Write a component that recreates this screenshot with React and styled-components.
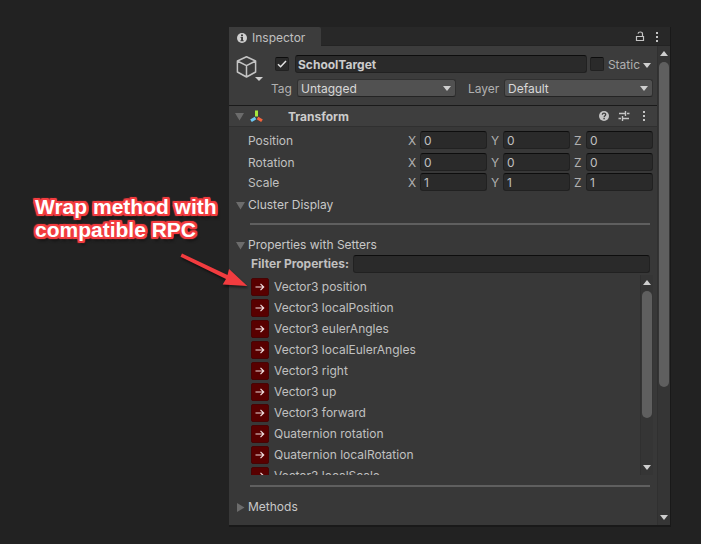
import React, { useState } from 'react';
import styled, { createGlobalStyle } from 'styled-components';

const GlobalStyle = createGlobalStyle`
  *, *::before, *::after { box-sizing: border-box; }
  body {
    margin: 0;
    background: #222222;
    color: #c0c0c0;
    font: 12px/18px Inter, "Liberation Sans", sans-serif;
  }
  button, input, select { font: inherit; color: inherit; margin: 0; }
`;

const Stage = styled.main`
  position: relative;
  min-height: 100vh;
  padding: 27px 31px 17px 229px;
`;

const Window = styled.section`
  background: #383838;
  border-bottom: 2px solid #191919;
  box-shadow: 1px 0 0 #191919;
`;

const TabStrip = styled.header`
  display: flex;
  justify-content: space-between;
  height: 19px;
  background: #282828;
  box-shadow: inset 0 -1px 0 #232323;
`;

const Tab = styled.h1`
  display: flex;
  align-items: center;
  gap: 5px;
  width: 92px;
  margin: 0;
  padding: 3px 0 0 8px;
  border-top-right-radius: 2px;
  background: #3c3c3c;
  font-size: 12px;
  font-weight: 400;
`;

const IconButton = styled.button`
  display: grid;
  place-items: center;
  width: 16px;
  height: 16px;
  padding: 0;
  border: 0;
  background: none;
  color: #c4c4c4;
`;

const StripTools = styled.div`
  display: flex;
  align-items: center;
  gap: 1px;
  padding-right: 5px;
`;

const Body = styled.div`
  display: flex;
`;

const Content = styled.div`
  flex: 1;
  min-width: 0;
  padding-bottom: 9px;
`;

const ObjectHeader = styled.div`
  display: flex;
  gap: 5px;
  padding: 9px 4px 8px 7px;
  background: #3c3c3c;
`;

const ObjectIcon = styled.button`
  display: block;
  width: 27px;
  height: 28px;
  padding: 0;
  border: 0;
  background: none;
  color: #c4c4c4;
`;

const HeaderFields = styled.div`
  flex: 1;
  display: grid;
  gap: 6px;
`;

const HeaderRow = styled.div`
  display: flex;
  align-items: center;
  height: 18px;
`;

const NameRow = styled(HeaderRow)`
  gap: 4px;
  padding-left: 7px;
`;

const TagRow = styled(HeaderRow)`
  padding-left: 3px;
`;

const TextInput = styled.input`
  flex: 1;
  min-width: 0;
  width: 100%;
  height: 18px;
  padding: 1px 3px 0;
  border: 1px solid #212121;
  border-top-color: #0d0d0d;
  border-radius: 3px;
  background: #2a2a2a;
  outline: none;
`;

const NameInput = styled(TextInput)`
  margin: 0 -1px 0 2px;
  padding: 1px 2px 0;
  font-weight: 700;
  color: #cccccc;
`;

const CheckWrap = styled.span`
  display: grid;
  width: 14px;
  height: 14px;
  > * { grid-area: 1 / 1; }
  > svg { pointer-events: none; display: none; }
  > input:checked + svg { display: block; }
`;

const CheckInput = styled.input`
  appearance: none;
  width: 14px;
  height: 14px;
  border: 1px solid #212121;
  border-top-color: #0d0d0d;
  border-radius: 2px;
  background: #2a2a2a;
`;

const StaticMenu = styled.button`
  display: flex;
  align-items: center;
  gap: 3px;
  height: 18px;
  padding: 2px 2px 0 0;
  border: 0;
  background: none;
  color: #b0b0b0;
`;

const FieldLabel = styled.label`
  flex: none;
  width: ${(p) => p.$width}px;
  padding-top: 2px;
  color: #b0b0b0;
`;

const SelectWrap = styled.span`
  flex: ${(p) => p.$grow} 1 0;
  display: grid;
  align-items: center;
  margin-right: ${(p) => p.$after || 0}px;
  > * { grid-area: 1 / 1; }
  > svg { justify-self: end; margin-right: 5px; pointer-events: none; }
`;

const Select = styled.select`
  appearance: none;
  width: 100%;
  height: 18px;
  padding: 0 18px 0 3px;
  border: 1px solid #303030;
  border-bottom-color: #242424;
  border-radius: 3px;
  background: #515151;
  color: #d8d8d8;
`;

const ComponentBar = styled.div`
  display: flex;
  align-items: center;
  height: 22px;
  padding: 0 5px 0 6px;
  border-top: 1px solid #1a1a1a;
  border-bottom: 1px solid #303030;
  background: #3e3e3e;
`;

const ComponentTitle = styled.h2`
  flex: 1;
  display: flex;
  align-items: center;
  gap: 25px;
  margin: 0 0 0 6px;
  font-size: 12px;
  font-weight: 700;
  color: #cccccc;
  > span { padding-top: 2px; }
`;

const BarTools = styled.div`
  display: flex;
  gap: 4px;
`;

const FoldToggle = styled.button`
  display: flex;
  align-items: center;
  gap: 3px;
  height: 18px;
  padding: 0;
  border: 0;
  background: none;
`;

const Fold = styled(FoldToggle)`
  margin-left: 7px;
  color: #c8c8c8;
`;

const VectorList = styled.div`
  display: grid;
  gap: 2px;
  padding: 4px 4px 5px 19px;
`;

const VectorRow = styled.fieldset`
  display: flex;
  gap: 4px;
  min-width: 0;
  height: 18px;
  margin: 0 0 ${(p) => (p.$spaced ? 2 : 0)}px;
  padding: 0;
  border: 0;
`;

const VectorName = styled.span`
  flex: none;
  width: 156px;
  padding-top: 1px;
`;

const Axis = styled.label`
  flex: 1;
  min-width: 0;
  display: flex;
  > span { flex: none; width: 12px; padding-top: 1px; color: #b0b0b0; }
`;

const Divider = styled.hr`
  height: 2px;
  margin: ${(p) => p.$before}px 7px ${(p) => p.$after}px 21px;
  border: 0;
  background: #5f5f5f;
`;

const FilterRow = styled.div`
  display: flex;
  align-items: center;
  margin-top: 1px;
  padding: 0 7px 0 22px;
  label { flex: none; width: 102px; font-weight: 700; color: #c0c0c0; }
`;

const ListView = styled.div`
  display: flex;
  height: 200px;
  margin: 2px 4px 0 22px;
`;

const PropertyList = styled.ul`
  flex: 1;
  min-width: 0;
  margin: 0;
  padding: 3px 0 0;
  overflow: hidden;
  list-style: none;
`;

const Property = styled.li`
  display: flex;
  align-items: center;
  gap: 5px;
  height: 18px;
  margin-bottom: 3px;
`;

const WrapButton = styled.button`
  display: grid;
  place-items: center;
  width: 18px;
  height: 18px;
  padding: 0;
  border: 1px solid #460404;
  border-radius: 2px;
  background: #580000;
  color: #f0dcdc;
`;

const ScrollTrack = styled.div`
  flex: none;
  display: flex;
  flex-direction: column;
  align-items: center;
  justify-content: space-between;
  width: 13px;
  padding: 5px 0;
  border-left: 1px solid #303030;
  background: #353535;
`;

const ScrollThumb = styled.div`
  flex: ${(p) => p.$size} 1 0;
  width: 10px;
  margin-top: 6px;
  border-radius: 5px;
  background: #5f5f5f;
`;

const ScrollRest = styled.div`
  flex: ${(p) => p.$size} 1 0;
`;

const Callout = styled.p`
  position: absolute;
  left: 35px;
  top: 195px;
  width: 190px;
  margin: 0;
  font: 700 21px/23px "Liberation Sans", Arial, sans-serif;
  color: #ffffff;
  text-shadow:
    2px 0 #f23c3f, -2px 0 #f23c3f, 0 2px #f23c3f, 0 -2px #f23c3f,
    2px 1px #f23c3f, -2px 1px #f23c3f, 2px -1px #f23c3f, -2px -1px #f23c3f,
    1px 2px #f23c3f, -1px 2px #f23c3f, 1px -2px #f23c3f, -1px -2px #f23c3f,
    2px 2px 1px #f23c3f, -2px 2px 1px #f23c3f, 2px -2px 1px #f23c3f, -2px -2px 1px #f23c3f,
    2px 4px 3px #00000080;
`;

const CalloutArrow = styled.svg`
  position: absolute;
  left: 176px;
  top: 248px;
  filter: drop-shadow(1px 2px 1px #00000080);
`;

const Caret = ({ up }) => (
  <svg width="8" height="5" viewBox="0 0 8 5" fill="#cfcfcf" aria-hidden="true">
    <path d={up ? 'M0 5 4 0 8 5Z' : 'M0 0H8L4 5Z'} />
  </svg>
);

const FoldArrow = ({ open }) => (
  <svg width="9" height="9" viewBox="0 0 9 9" fill="#6c6c6c" aria-hidden="true">
    <path d={open ? 'M0 1H9L4.5 8.5Z' : 'M1 0V9L8.5 4.5Z'} />
  </svg>
);

const InfoIcon = () => (
  <svg width="10" height="10" viewBox="0 0 10 10" aria-hidden="true">
    <circle cx="5" cy="5" r="5" fill="#cfcfcf" />
    <path d="M4 1.6h2v1.6H4zM3.6 4H6v3.2h.7V8.3H3.4V7.2h.7V5.1h-.5z" fill="#3c3c3c" />
  </svg>
);

const LockIcon = () => (
  <svg width="10" height="11" viewBox="0 0 10 11" fill="none" stroke="currentColor" aria-hidden="true">
    <path d="M1.5 5.5h7v4h-7z" strokeWidth="1.2" />
    <path d="M7.5 5.5V2.8C7.5 1.5 6.600 1 5.3 1S3.2 1.5 3 2.6" strokeWidth="1.2" />
  </svg>
);

const DotsIcon = () => (
  <svg width="2" height="10" viewBox="0 0 2 10" fill="currentColor" aria-hidden="true">
    <rect width="2" height="2" />
    <rect y="4" width="2" height="2" />
    <rect y="8" width="2" height="2" />
  </svg>
);

const HelpIcon = () => (
  <svg width="10" height="10" viewBox="0 0 10 10" aria-hidden="true">
    <circle cx="5" cy="5" r="5" fill="currentColor" />
    <path d="M3.3 3.7C3.4 2.6 4 2.2 5 2.2S6.7 2.8 6.7 3.7C6.7 4.8 5.1 4.8 5.1 6.2" fill="none" stroke="#3e3e3e" strokeWidth="1.3" />
    <rect x="4.4" y="7" width="1.4" height="1.3" fill="#3e3e3e" />
  </svg>
);

const PresetIcon = () => (
  <svg width="12" height="10" viewBox="0 0 12 10" fill="none" stroke="currentColor" strokeWidth="1.4" aria-hidden="true">
    <path d="M1 2.5H7.5M9 2.5H11.500M7.5 0V5M.5 7.500H3M4.5 7.500H11M4.5 5V10" />
  </svg>
);

const CubeIcon = () => (
  <svg width="27" height="28" viewBox="0 0 27 28" fill="none" aria-hidden="true">
    <path d="M10.500 1.800 19.600 6v11L10.500 22 1.400 17V6Z M1.400 6l9.100 4.600L19.600 6M10.500 10.600V22" stroke="currentColor" strokeWidth="1.500" strokeLinejoin="round" />
    <path d="M19 22h8l-4 4z" fill="#cfcfcf" />
  </svg>
);

const AxesIcon = () => (
  <svg width="13" height="13" viewBox="0 0 13 13" fill="none" strokeWidth="3" aria-hidden="true">
    <path d="M6.500 .5v6" stroke="#a8e83e" />
    <path d="M5.500 8 1 10.800" stroke="#6cc8f4" />
    <path d="M7.500 8l4.500 2.800" stroke="#f4643c" />
  </svg>
);

const RightArrow = () => (
  <svg width="10" height="8" viewBox="0 0 10 8" fill="none" stroke="currentColor" strokeWidth="1.2" aria-hidden="true">
    <path d="M.5 4H8.5M5.500 .8 8.700 4 5.500 7.200" />
  </svg>
);

const CheckMark = () => (
  <svg width="14" height="14" viewBox="0 0 14 14" fill="none" stroke="#e4e4e4" strokeWidth="1.5" aria-hidden="true">
    <path d="M3 7.200 5.600 9.700 11 4" />
  </svg>
);

const Checkbox = ({ label, checked: initial }) => {
  const [checked, setChecked] = useState(Boolean(initial));
  return (
    <CheckWrap>
      <CheckInput type="checkbox" aria-label={label} checked={checked} onChange={() => setChecked(!checked)} />
      <CheckMark />
    </CheckWrap>
  );
};

const Dropdown = ({ id, value, grow, after }) => (
  <SelectWrap $grow={grow} $after={after}>
    <Select id={id} defaultValue={value}>
      <option>{value}</option>
    </Select>
    <Caret />
  </SelectWrap>
);

const vectors = [
  { name: 'Position', value: '0', spaced: true },
  { name: 'Rotation', value: '0' },
  { name: 'Scale', value: '1' },
];

const properties = [
  'Vector3 position',
  'Vector3 localPosition',
  'Vector3 eulerAngles',
  'Vector3 localEulerAngles',
  'Vector3 right',
  'Vector3 up',
  'Vector3 forward',
  'Quaternion rotation',
  'Quaternion localRotation',
  'Vector3 localScale',
];

export default function App() {
  return (
    <>
      <GlobalStyle />
      <Stage>
        <Window>
          <TabStrip>
            <Tab><InfoIcon />Inspector</Tab>
            <StripTools>
              <IconButton aria-label="Lock"><LockIcon /></IconButton>
              <IconButton aria-label="Window menu"><DotsIcon /></IconButton>
            </StripTools>
          </TabStrip>
          <Body>
            <Content>
              <ObjectHeader>
                <ObjectIcon aria-label="Object icon"><CubeIcon /></ObjectIcon>
                <HeaderFields>
                  <NameRow>
                    <Checkbox label="Active" checked />
                    <NameInput aria-label="Name" defaultValue="SchoolTarget" />
                    <Checkbox label="Static" />
                    <StaticMenu>Static<Caret /></StaticMenu>
                  </NameRow>
                  <TagRow>
                    <FieldLabel htmlFor="tag" $width={26}>Tag</FieldLabel>
                    <Dropdown id="tag" value="Untagged" grow={159} after={12} />
                    <FieldLabel htmlFor="layer" $width={36}>Layer</FieldLabel>
                    <Dropdown id="layer" value="Default" grow={149} />
                  </TagRow>
                </HeaderFields>
              </ObjectHeader>
              <ComponentBar>
                <FoldToggle aria-label="Toggle Transform"><FoldArrow open /></FoldToggle>
                <ComponentTitle><AxesIcon /><span>Transform</span></ComponentTitle>
                <BarTools>
                  <IconButton aria-label="Help"><HelpIcon /></IconButton>
                  <IconButton aria-label="Presets"><PresetIcon /></IconButton>
                  <IconButton aria-label="Component menu"><DotsIcon /></IconButton>
                </BarTools>
              </ComponentBar>
              <VectorList>
                {vectors.map(({ name, value, spaced }) => (
                  <VectorRow key={name} $spaced={spaced} aria-label={name}>
                    <VectorName>{name}</VectorName>
                    {['X', 'Y', 'Z'].map((axis) => (
                      <Axis key={axis}>
                        <span>{axis}</span>
                        <TextInput defaultValue={value} />
                      </Axis>
                    ))}
                  </VectorRow>
                ))}
              </VectorList>
              <Fold><FoldArrow open />Cluster Display</Fold>
              <Divider $before={9} $after={11} />
              <Fold><FoldArrow open />Properties with Setters</Fold>
              <FilterRow>
                <label htmlFor="filter">Filter Properties:</label>
                <TextInput id="filter" />
              </FilterRow>
              <ListView>
                <PropertyList>
                  {properties.map((name) => (
                    <Property key={name}>
                      <WrapButton aria-label={`Wrap ${name}`}><RightArrow /></WrapButton>
                      {name}
                    </Property>
                  ))}
                </PropertyList>
                <ScrollTrack>
                  <Caret up />
                  <ScrollThumb $size={127} />
                  <ScrollRest $size={47} />
                  <Caret />
                </ScrollTrack>
              </ListView>
              <Divider $before={10} $after={11} />
              <Fold><FoldArrow />Methods</Fold>
            </Content>
            <ScrollTrack>
              <Caret up />
              <ScrollThumb $size={325} />
              <ScrollRest $size={128} />
              <Caret />
            </ScrollTrack>
          </Body>
        </Window>
        <Callout>Wrap method with compatible RPC</Callout>
        <CalloutArrow width="76" height="46" viewBox="0 0 76 46" fill="#f23c3f" aria-hidden="true">
          <path d="M6 5.500 51.500 27 53 21 71.300 38 46.700 36.500 50 31 4.500 8.800Z" />
        </CalloutArrow>
      </Stage>
    </>
  );
}
